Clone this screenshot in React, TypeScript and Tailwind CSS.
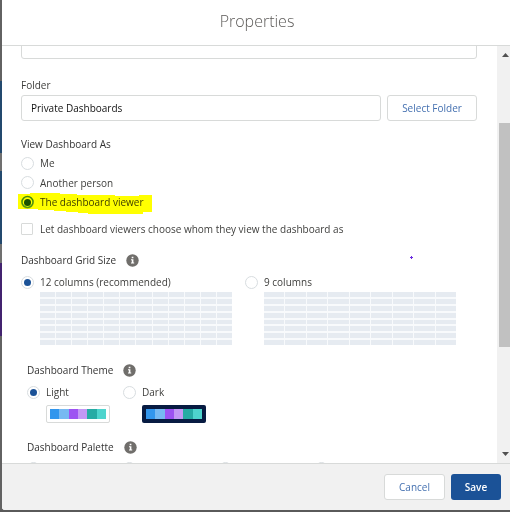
import React from "react";

const swatches = ["bg-[#3296ed]", "bg-[#77b9f2]", "bg-[#9d53f2]", "bg-[#c398f5]", "bg-[#26aba4]", "bg-[#4ed4cd]"];

const palettes = ["Palette 1", "Palette 2", "Palette 3", "Palette 4"];

const radioStyle =
  "m-0 flex size-[13px] shrink-0 appearance-none items-center justify-center rounded-full border border-[#d8dde0] bg-white checked:before:size-[7px] checked:before:rounded-full checked:before:bg-[#1b5297] checked:before:content-['']";

type RadioProps = {
  name: string;
  label: string;
  checked?: boolean;
  className?: string;
  children?: React.ReactNode;
};

const Radio = ({ name, label, checked, className = "h-5", children }: RadioProps) => (
  <label className={`relative flex items-center gap-[6px] ${className}`}>
    <input type="radio" name={name} defaultChecked={checked} className={radioStyle} />
    <span className="whitespace-nowrap">{label}</span>
    {children}
  </label>
);

const InfoButton = () => (
  <button type="button" aria-label="Help" className="size-[13px] shrink-0">
    <svg viewBox="0 0 13 13" className="block size-full">
      <circle cx="6.5" cy="6.5" r="6.2" fill="#706e6b" />
      <path d="M5.7 2.7h1.7v1.6H5.7zM5 5.3h2.4v3.3h.8v1H5v-1h.8V6.3H5z" fill="#fff" />
    </svg>
  </button>
);

const Heading = ({ children }: { children: React.ReactNode }) => (
  <div className="flex h-4 items-center gap-[10px] font-medium text-[#333]">
    <h2>{children}</h2>
    <InfoButton />
  </div>
);

const GridPreview = ({ columns }: { columns: number }) => (
  <div
    className={`ml-[19px] grid h-[53px] w-48 gap-x-px gap-y-[2px] bg-[#f8fafc] ${
      columns === 12 ? "grid-cols-12" : "grid-cols-9"
    }`}
  >
    {Array.from({ length: columns * 8 }, (_, i) => (
      <span key={i} className="bg-[#e6ebf1]" />
    ))}
  </div>
);

const ThemePreview = ({ dark }: { dark?: boolean }) => (
  <div
    className={`ml-[19px] flex h-[18px] w-16 rounded-[2px] ${
      dark ? "bg-[#071b42] p-1" : "border border-[#d8dad9] p-[3px]"
    }`}
  >
    {swatches.map((color) => (
      <span key={color} className={`flex-1 ${color}`} />
    ))}
  </div>
);

const Scrollbar = () => (
  <div className="w-[13px] shrink-0 overflow-hidden bg-[#f1f1f1]">
    <div className="flex h-full w-[17px] flex-col items-center">
      <svg viewBox="0 0 17 17" className="size-[17px] shrink-0">
        <path d="M5 11h7L8.500 7z" fill="#505050" />
      </svg>
      <div className="grow-[60]" />
      <div className="w-[13px] grow-[224] bg-[#c1c1c1]" />
      <div className="grow-[99]" />
      <svg viewBox="0 0 17 17" className="size-[17px] shrink-0">
        <path d="M5 6h7L8.500 10z" fill="#505050" />
      </svg>
    </div>
  </div>
);

// Sliver of the page that stays visible beside the dialog
const Backdrop = () => (
  <div className="flex w-[2px] shrink-0 flex-col bg-[#626262]">
    <div className="grow-[81]" />
    <div className="grow-[73] bg-[#23496e]" />
    <div className="grow-[18] bg-[#707070]" />
    <div className="grow-[73] bg-[#23496e]" />
    <div className="grow-[19] bg-[#707070]" />
    <div className="grow-[73] bg-[#43236f]" />
    <div className="grow-[175]" />
  </div>
);

export default function App() {
  return (
    <div className="flex h-screen bg-[#5a5a5a] pb-[2px] font-['Open_Sans','Noto_Sans',sans-serif] text-[10px] leading-4 text-[#3e3e3c]">
      <Backdrop />
      <div role="dialog" aria-labelledby="title" className="flex min-w-0 flex-1 flex-col rounded-bl-[3px] bg-white">
        <header className="flex h-[46px] shrink-0 items-center justify-center border-b border-[#d8dad9] pb-1 pl-[2px]">
          <h1 id="title" className="text-base font-light text-[#5c5a58]">
            Properties
          </h1>
        </header>

        <div className="flex min-h-0 flex-1">
          <form className="min-w-0 flex-1 overflow-hidden pr-5 pl-[19px]">
            <input
              aria-label="Description"
              className="-mt-[13px] block h-[26px] w-full rounded-[3px] border border-[#d8dad9] bg-white px-2"
            />

            <label htmlFor="folder" className="mt-[18px] block">
              Folder
            </label>
            <div className="mt-[2px] flex gap-[6px]">
              <input
                id="folder"
                readOnly
                defaultValue="Private Dashboards"
                className="h-[26px] min-w-0 flex-1 rounded-[3px] border border-[#d8dad9] bg-white px-[9px] text-[#111]"
              />
              <button
                type="button"
                className="h-[26px] w-[90px] rounded-[3px] border border-[#d8dad9] bg-white text-[#4470b0]"
              >
                Select Folder
              </button>
            </div>

            <fieldset className="mt-[15px]">
              <legend className="mb-px font-medium text-[#333]">View Dashboard As</legend>
              <Radio name="viewAs" label="Me" />
              <Radio name="viewAs" label="Another person" className="h-[19px]" />
              <Radio name="viewAs" label="The dashboard viewer" checked>
                <svg
                  viewBox="0 0 134 21"
                  className="pointer-events-none absolute -left-[3px] top-[1px] h-[21px] w-[134px] mix-blend-multiply"
                >
                  <path
                    d="M0 1h12V0h30v1h17v1h38v1h24v-1h13v17h-9v2H70v-1H60v-1H48v-1H36v-1H20v-1H0z"
                    fill="#ffff00"
                  />
                  <circle cx="9.500" cy="9" r="5.500" fill="none" stroke="#4f9a10" strokeWidth="1.500" />
                </svg>
              </Radio>
            </fieldset>
            <label className="mt-[7px] flex h-5 items-center gap-[7px]">
              <input
                type="checkbox"
                className="m-0 size-3 shrink-0 appearance-none rounded-[1px] border border-[#d8dad9] bg-white"
              />
              Let dashboard viewers choose whom they view the dashboard as
            </label>

            <section className="relative mt-[13px]">
              <Heading>Dashboard Grid Size</Heading>
              <svg viewBox="0 0 3 3" className="absolute left-[389px] top-1 size-[3px]">
                <path d="M1 0h1v1h1v1H2v1H1V2H0V1h1z" fill="#6a2be0" />
              </svg>
              <div className="mt-1 flex gap-[13px]">
                <div>
                  <Radio name="grid" label="12 columns (recommended)" checked />
                  <GridPreview columns={12} />
                </div>
                <div>
                  <Radio name="grid" label="9 columns" />
                  <GridPreview columns={9} />
                </div>
              </div>
            </section>

            <section className="mt-[17px] pl-[6px]">
              <Heading>Dashboard Theme</Heading>
              <div className="mt-1 flex gap-[13px]">
                <div>
                  <Radio name="theme" label="Light" checked className="mb-[3px] h-5" />
                  <ThemePreview />
                </div>
                <div>
                  <Radio name="theme" label="Dark" className="mb-[3px] h-5" />
                  <ThemePreview dark />
                </div>
              </div>
            </section>

            <section className="mt-4 pl-[6px]">
              <Heading>Dashboard Palette</Heading>
              <div className="mt-[7px] flex gap-[83px]">
                {palettes.map((palette) => (
                  <input key={palette} type="radio" name="palette" aria-label={palette} className={radioStyle} />
                ))}
              </div>
            </section>
          </form>
          <Scrollbar />
        </div>

        <footer className="flex h-[47px] shrink-0 items-center justify-end gap-[6px] rounded-bl-[3px] border-t border-[#d8dad9] bg-[#f1f1f1] pr-[9px]">
          <button
            type="button"
            className="h-[26px] w-[61px] rounded-[3px] border border-[#d8dad9] bg-white text-[#4470b0]"
          >
            Cancel
          </button>
          <button type="button" className="h-[26px] w-[50px] rounded-[3px] bg-[#1b5297] font-semibold text-white">
            Save
          </button>
        </footer>
      </div>
    </div>
  );
}
